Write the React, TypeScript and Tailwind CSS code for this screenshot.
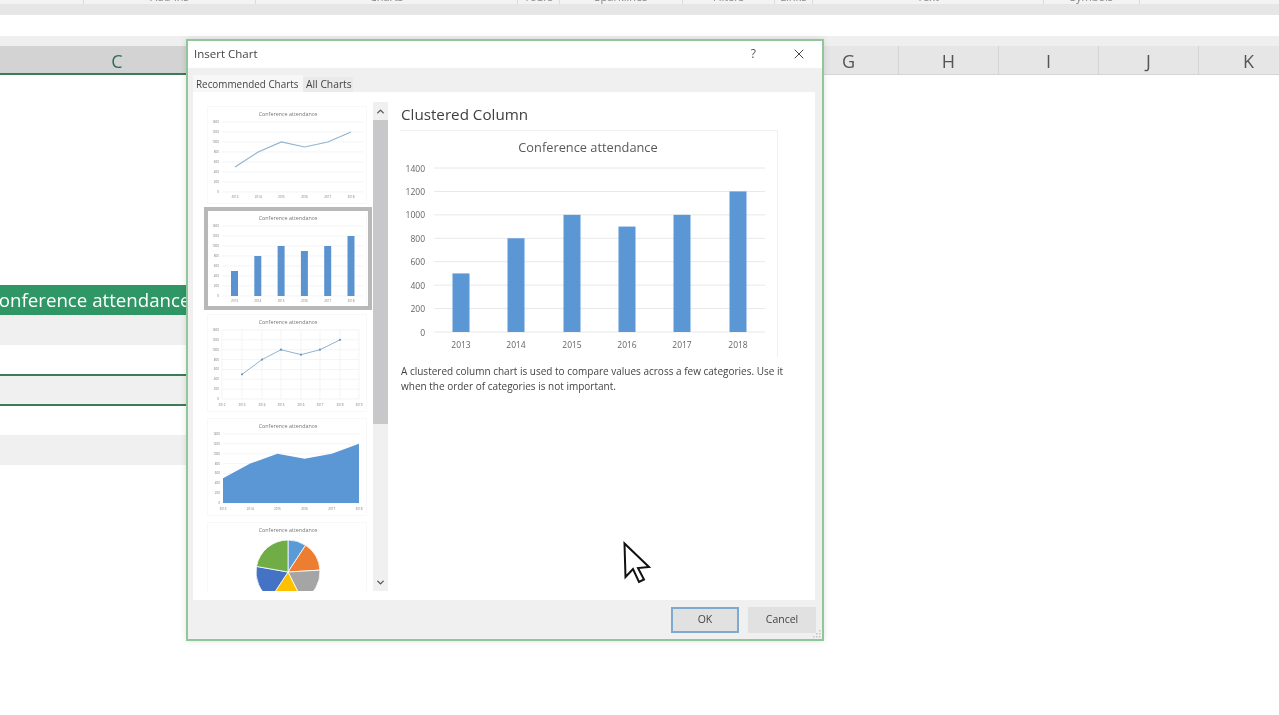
import { ChevronDown, ChevronUp, X } from "lucide-react";

const font = "[font-family:'Open_Sans','Noto_Sans',sans-serif]";
const values = [500, 800, 1000, 900, 1000, 1200];
const years = ["2013", "2014", "2015", "2016", "2017", "2018"];
const ticks = [0, 200, 400, 600, 800, 1000, 1200, 1400];
const svgFont = "Open Sans, Noto Sans, sans-serif";

const ribbonGroups = [
  { width: "w-[84px]", label: "" },
  { width: "w-[172px]", label: "Add-ins" },
  { width: "w-[262px]", label: "Charts" },
  { width: "w-[42px]", label: "Tours" },
  { width: "w-[123px]", label: "Sparklines" },
  { width: "w-[92px]", label: "Filters" },
  { width: "w-[38px]", label: "Links" },
  { width: "w-[231px]", label: "Text" },
  { width: "w-[96px]", label: "Symbols" },
];

function ThumbFrame({ children }: { children: React.ReactNode }) {
  return (
    <svg width="160" height="98" viewBox="0 0 160 98" className="ml-[3px] block">
      <rect x="0.5" y="0.5" width="159" height="97" fill="#fff" stroke="#f8f8f8" />
      <text x="81" y="9.5" fontSize="5.4" fill="#777" textAnchor="middle" fontFamily={svgFont}>
        Conference attendance
      </text>
      {children}
    </svg>
  );
}

// y axis with small labels, shared by the thumbnails
function ThumbAxis({ top = 16, bottom = 86, left = 15, right = 156 }: { top?: number; bottom?: number; left?: number; right?: number }) {
  return (
    <g>
      {ticks.map((t) => {
        const y = bottom - (t / 1400) * (bottom - top);
        return (
          <g key={t}>
            <line x1={left} x2={right} y1={y} y2={y} stroke="#efefef" strokeWidth="0.7" />
            <text x={left - 3} y={y + 1} fontSize="3" fill="#777" textAnchor="end" fontFamily={svgFont}>
              {t}
            </text>
          </g>
        );
      })}
    </g>
  );
}

function ThumbYears({ xs, y = 92 }: { xs: number[]; y?: number }) {
  const labels = xs.length === 8 ? ["2012", ...years, "2019"] : years;
  return (
    <g>
      {xs.map((x, i) => (
        <text key={x} x={x} y={y} fontSize="3" fill="#777" textAnchor="middle" fontFamily={svgFont}>
          {labels[i]}
        </text>
      ))}
    </g>
  );
}

function LineThumb() {
  const xs = values.map((_, i) => 28 + i * 23.2);
  const pts = values.map((v, i) => `${xs[i]},${86 - (v / 1400) * 70}`).join(" ");
  return (
    <ThumbFrame>
      <ThumbAxis />
      <polyline points={pts} fill="none" stroke="#8fb4d2" strokeWidth="1.2" />
      <ThumbYears xs={xs} />
    </ThumbFrame>
  );
}

function ColumnThumb() {
  const xs = values.map((_, i) => 27.5 + i * 23.3);
  return (
    <ThumbFrame>
      <ThumbAxis />
      {values.map((v, i) => (
        <rect key={i} x={xs[i] - 3.5} y={86 - (v / 1400) * 70} width="7" height={(v / 1400) * 70} fill="#5b93cf" />
      ))}
      <ThumbYears xs={xs} />
    </ThumbFrame>
  );
}

function MarkerThumb() {
  const xs = [15, 35, 55, 74, 94, 113, 133, 152];
  const pts = values.map((v, i) => [xs[i + 1], 85 - (v / 1400) * 69]);
  return (
    <ThumbFrame>
      <ThumbAxis top={16} bottom={85} left={15} right={152} />
      {xs.map((x) => (
        <line key={x} x1={x} x2={x} y1={16} y2={85} stroke="#efefef" strokeWidth="0.7" />
      ))}
      <polyline points={pts.map((p) => p.join(",")).join(" ")} fill="none" stroke="#8fb4d2" strokeWidth="1" />
      {pts.map((p) => (
        <circle key={p[0]} cx={p[0]} cy={p[1]} r="1.1" fill="#6b94b8" />
      ))}
      <ThumbYears xs={xs} />
    </ThumbFrame>
  );
}

function AreaThumb() {
  const xs = values.map((_, i) => 16 + i * 27.2);
  const pts = values.map((v, i) => `${xs[i]},${85 - (v / 1400) * 69}`).join(" ");
  return (
    <ThumbFrame>
      <ThumbAxis top={16} bottom={85} left={16} right={152} />
      <polygon points={`16,85 ${pts} 152,85`} fill="#5b96d5" />
      <ThumbYears xs={xs} />
    </ThumbFrame>
  );
}

function PieThumb() {
  const colors = ["#5b9bd5", "#ed7d31", "#a5a5a5", "#ffc000", "#4472c4", "#70ad47"];
  const total = values.reduce((a, b) => a + b, 0);
  let angle = 0;
  const slices = values.map((v, i) => {
    const a0 = angle;
    angle += (v / total) * Math.PI * 2;
    const [cx, cy, r] = [81, 50, 32];
    const d = `M${cx} ${cy} L${cx + r * Math.sin(a0)} ${cy - r * Math.cos(a0)} A${r} ${r} 0 0 1 ${cx + r * Math.sin(angle)} ${cy - r * Math.cos(angle)} Z`;
    return <path key={i} d={d} fill={colors[i]} stroke="#fff" strokeWidth="0.8" />;
  });
  return <ThumbFrame>{slices}</ThumbFrame>;
}

function MainChart() {
  const xs = [61, 116, 172, 227, 282, 338];
  const zero = 202;
  const scale = 164 / 1400;
  return (
    <svg width="378" height="227" viewBox="0 0 378 227" className="block">
      <path d="M0 0.5 H377.5 V227" fill="none" stroke="#f0f0f0" />
      <text x="188" y="22" fontSize="12.8" fill="#595959" textAnchor="middle" fontFamily={svgFont}>
        Conference attendance
      </text>
      {ticks.map((t) => (
        <g key={t}>
          <line x1="34" x2="365" y1={zero - t * scale} y2={zero - t * scale} stroke="#e8e8e8" />
          <text x="25" y={zero - t * scale + 3.5} fontSize="8.5" fill="#666" textAnchor="end" fontFamily={svgFont}>
            {t}
          </text>
        </g>
      ))}
      {values.map((v, i) => (
        <g key={i}>
          <rect x={xs[i] - 8.5} y={zero - v * scale} width="17" height={v * scale} fill="#5b96d5" />
          <text x={xs[i]} y="218" fontSize="8.5" fill="#666" textAnchor="middle" fontFamily={svgFont}>
            {years[i]}
          </text>
        </g>
      ))}
    </svg>
  );
}

function InsertChartDialog() {
  const thumbs = [<LineThumb />, <ColumnThumb />, <MarkerThumb />, <AreaThumb />, <PieThumb />];
  return (
    <div className="absolute left-[186px] top-[39px] flex h-[602px] w-[638px] flex-col border-2 border-[#8fc79b] bg-[#f0f0f0] shadow-[0_0_6px_rgba(0,0,0,0.12)]">
      <div className="flex h-[27px] shrink-0 items-center bg-white pb-[1px] pl-[6px] text-[11.5px] text-[#444]">
        <span className="flex-1">Insert Chart</span>
        <span className="mr-[35px] text-[12px] text-[#555]">?</span>
        <X size={16} strokeWidth={1.5} className="mr-[15px] text-[#444]" />
      </div>
      <div className="flex h-[24px] shrink-0 items-end whitespace-nowrap pl-[5px] text-[10.3px]">
        <div className="flex h-[17px] w-[110px] items-center bg-[#f7f7f7] pl-[3px] pt-[1px] text-[9.9px] text-[#444]">Recommended Charts</div>
        <div className="flex h-[15px] w-[50px] items-center bg-[#eaeaea] pl-[3px] pt-[1px] text-[#444]">All Charts</div>
      </div>
      <div className="ml-[5px] mr-[7px] flex h-[508px] shrink-0 bg-white pl-[11px] pt-[10px]">
        <div className="h-[489px] w-[169px] overflow-hidden">
          {thumbs.map((thumb, i) => (
            <div key={i} className="relative h-[104px] pt-[4px]">
              {thumb}
              {i === 1 && <div className="absolute bottom-0 left-0 right-[1px] top-[1px] border-4 border-[#b8b8b8]" />}
            </div>
          ))}
        </div>
        <div className="flex h-[489px] w-[15px] flex-col bg-[#f0f0f0] text-[#555]">
          <div className="flex h-[18px] items-center justify-center">
            <ChevronUp size={11} strokeWidth={3} />
          </div>
          <div className="h-[304px] bg-[#c8c7c9]" />
          <div className="flex-1" />
          <div className="flex h-[18px] items-center justify-center">
            <ChevronDown size={11} strokeWidth={3} />
          </div>
        </div>
        <div className="ml-[12px] flex w-[400px] flex-col">
          <h2 className="pl-[1px] text-[15.2px] leading-[24px] text-[#404040]">Clustered Column</h2>
          <div className="mt-[4px]">
            <MainChart />
          </div>
          <p className="mt-[7px] whitespace-nowrap pl-[1px] text-[10px] leading-[15px] text-[#444]">
            A clustered column chart is used to compare values across a few categories. Use it
            <br />
            when the order of categories is not important.
          </p>
        </div>
      </div>
      <div className="relative flex flex-1 items-center justify-end gap-[9px] pr-[6px] text-[10.5px] text-[#444]">
        <button className="h-[26px] w-[68px] border-2 border-[#7fa9cf] bg-[#e1e1e1]">OK</button>
        <button className="h-[26px] w-[68px] bg-[#e1e1e1]">Cancel</button>
        <svg width="8" height="8" viewBox="0 0 8 8" className="absolute bottom-[1px] right-[1px]" fill="#c4c4c4">
          <rect x="6" y="0" width="1.5" height="1.5" />
          <rect x="3" y="3" width="1.5" height="1.5" />
          <rect x="6" y="3" width="1.5" height="1.5" />
          <rect x="0" y="6" width="1.5" height="1.5" />
          <rect x="3" y="6" width="1.5" height="1.5" />
          <rect x="6" y="6" width="1.5" height="1.5" />
        </svg>
      </div>
    </div>
  );
}

export default function App() {
  return (
    <div className={`relative h-[715px] w-[1279px] overflow-hidden bg-white ${font} blur-[0.5px]`}>
      {/* ribbon, only the group labels peek in at the top */}
      <div className="flex h-[4px] overflow-hidden bg-[#f3f3f3]">
        {ribbonGroups.map((g) => (
          <div key={g.width + g.label} className={`${g.width} flex h-[4px] shrink-0 items-end justify-center border-r border-[#dcdcdc] text-[11px] leading-[14px] text-[#888]`}>
            {g.label}
          </div>
        ))}
      </div>
      <div className="h-[11px] bg-[#e6e6e6]" />
      <div className="h-[21px] bg-white" />
      <div className="h-[10px] bg-[#efefef]" />

      <div className="flex h-[29px] text-[18px] text-[#555]">
        <div className="w-[17px] shrink-0 border-b-2 border-[#3c7a58] bg-[#d3d3d3]" />
        <div className="flex w-[200px] shrink-0 items-center justify-center border-b-2 border-[#3c7a58] bg-[#d3d3d3] pt-[3px] text-[#2f6f50]">C</div>
        <div className="w-[582px] shrink-0 bg-[#e6e6e6]" />
        {["G", "H", "I", "J", "K"].map((c) => (
          <div key={c} className="flex w-[100px] shrink-0 items-center justify-center border-b border-r border-[#d4d4d4] bg-[#e6e6e6] pt-[3px]">
            {c}
          </div>
        ))}
      </div>

      <div className="w-[217px]">
        <div className="h-[210px] bg-white" />
        <div className="flex h-[30px] items-center overflow-hidden whitespace-nowrap bg-[#2f9766] text-[18.7px] text-white">
          <span className="-ml-[13px]">Conference attendance</span>
        </div>
        <div className="h-[30px] bg-[#f0f0f0]" />
        <div className="h-[30px] border-b border-[#3c7a58] bg-white" />
        <div className="h-[30px] border-y border-[#3c7a58] bg-[#f0f0f0]" />
        <div className="h-[30px] border-t border-[#3c7a58] bg-white" />
        <div className="h-[30px] bg-[#f0f0f0]" />
      </div>

      <InsertChartDialog />

      {/* mouse pointer */}
      <svg width="30" height="44" viewBox="0 0 30 44" className="absolute left-[622px] top-[541px]">
        <path d="M2.5 2.5 L3.5 36 L11 28 L17 41 L22 38.5 L16 27 L27 26 Z" fill="#fff" stroke="#111" strokeWidth="2" strokeLinejoin="miter" />
      </svg>
    </div>
  );
}
